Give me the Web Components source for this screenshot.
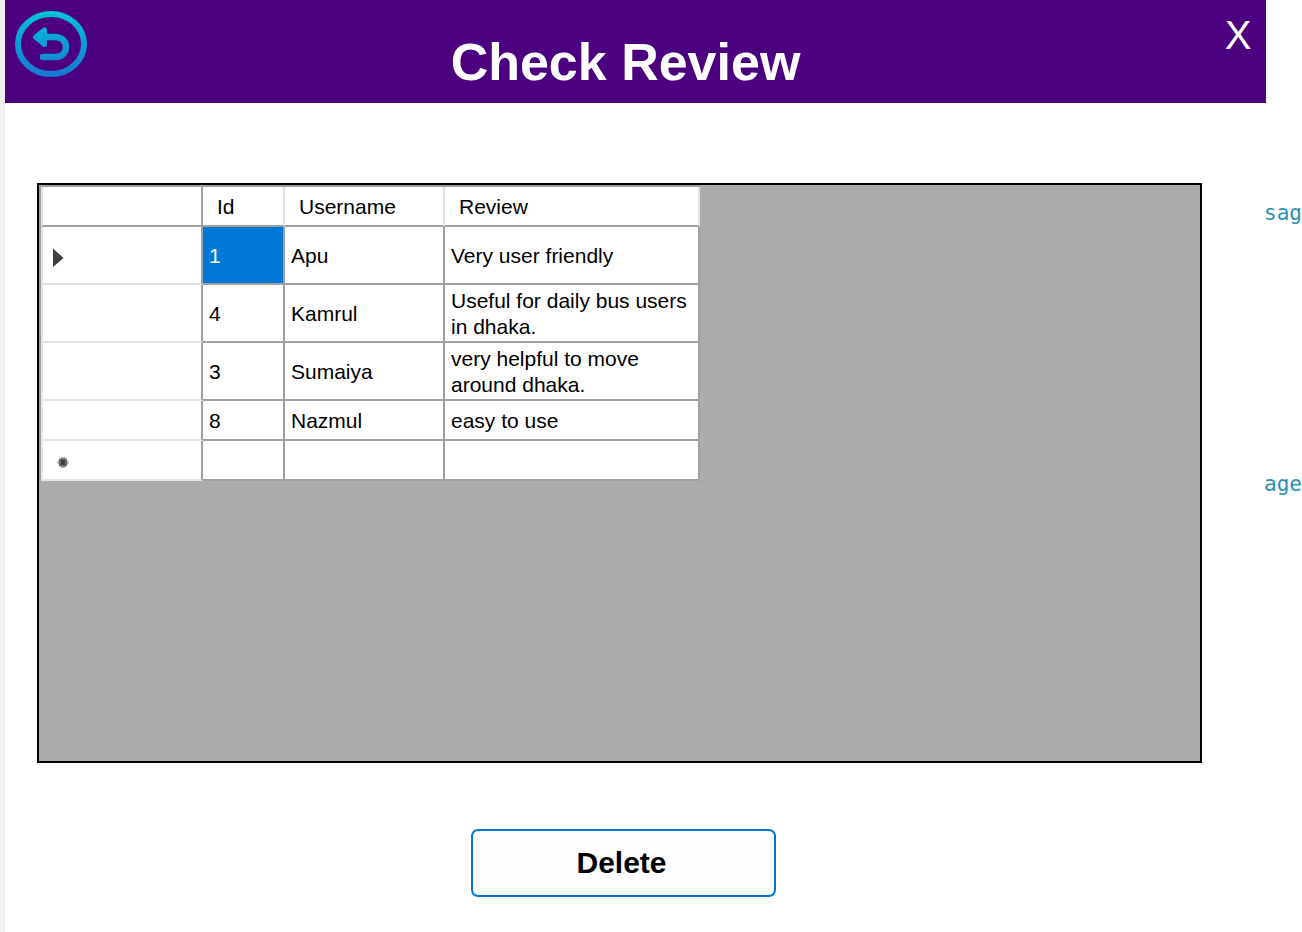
<!DOCTYPE html>
<html lang="en">
<head>
<meta charset="utf-8">
<title>Check Review</title>
<style>
body { margin: 0; background: #fff; font-family: "Liberation Sans", sans-serif; }
</style>
</head>
<body>
<review-window>
  <window-header slot="header">Check Review</window-header>
  <review-grid slot="grid"></review-grid>
  <action-button slot="action">Delete</action-button>
  <code-peek slot="code"></code-peek>
</review-window>

<template id="review-window">
  <style>
    :host { display: grid; grid-template-columns: 5px minmax(0, 1fr) 36px; min-height: 100vh; }
    .edge { background: #f0f0f0; }
    .form { display: flex; flex-direction: column; }
    .grid { flex: 1; display: flex; padding: 80px 64px 66px 32px; }
    .grid ::slotted(*) { flex: 1; min-width: 0; }
    .action { display: flex; justify-content: center; padding: 0 24px 35px 0; }
  </style>
  <div class="edge"></div>
  <main class="form">
    <slot name="header"></slot>
    <div class="grid"><slot name="grid"></slot></div>
    <div class="action"><slot name="action"></slot></div>
  </main>
  <slot name="code"></slot>
</template>

<template id="window-header">
  <style>
    :host { display: grid; grid-template-columns: 80px 1fr 100px; height: 103px; background: #4b0080; color: #fff; }
    h1 { margin: 0; padding-top: 32px; text-align: center; font-size: 52px; line-height: 60px; font-weight: 700; }
    button { border: 0; background: none; color: inherit; font: inherit; padding: 0; cursor: pointer; }
    .back { justify-self: start; align-self: start; margin: 11px 0 0 10px; height: 66px; }
    .back svg { display: block; }
    .close { justify-self: end; align-self: start; margin-top: 12px; width: 56px; font-size: 40px; line-height: 46px; }
  </style>
  <button class="back" aria-label="Back">
    <svg width="72" height="66" viewBox="0 0 72 66" fill="none">
      <defs><linearGradient id="g" gradientUnits="userSpaceOnUse" x1="0" y1="0" x2="0" y2="66">
        <stop offset="0" stop-color="#00c3d8"/><stop offset="1" stop-color="#1976d2"/></linearGradient></defs>
      <ellipse cx="36" cy="33" rx="33" ry="30" stroke="url(#g)" stroke-width="6"/>
      <path d="M27 26H39.500C47 26 51 30.500 51 36S47 46 40 46H28" stroke="url(#g)" stroke-width="6.500" stroke-linecap="round"/>
      <path d="M20.500 26L29.500 19V33.500Z" fill="url(#g)" stroke="url(#g)" stroke-width="5" stroke-linejoin="round"/>
    </svg>
  </button>
  <h1><slot></slot></h1>
  <button class="close" aria-label="X">X</button>
</template>

<template id="review-grid">
  <style>
    :host { display: block; box-sizing: border-box; border: 2px solid #000; background: #ababab; min-height: 480px; }
    table { table-layout: fixed; width: 661px; border-collapse: separate; border-spacing: 0; border: solid #a0a0a0; border-width: 2px 0 0 2px; background: #fff; color: #000; font: 21px/26px "Liberation Sans", sans-serif; }
    .c0 { width: 162px; } .c1 { width: 82px; } .c2 { width: 160px; } .c3 { width: 255px; }
    th, td { box-sizing: border-box; height: 40px; padding: 2px 4px 0 6px; border: solid #a0a0a0; border-width: 0 2px 2px 0; text-align: left; font-weight: 400; vertical-align: middle; }
    thead th { padding: 2px 4px 0 14px; border-right-color: #e3e3e3; }
    thead td { border-right-color: #a0a0a0; border-left: 2px solid #e3e3e3; }
    tbody th { padding: 0 0 0 10px; border-left: 2px solid #e3e3e3; border-bottom-color: #e3e3e3; }
    .tall > * { height: 58px; }
    .selected { background: #0078d7; color: #fff; }
    svg { display: block; }
  </style>
  <table aria-label="Reviews">
    <colgroup><col class="c0"><col class="c1"><col class="c2"><col class="c3"></colgroup>
    <thead><tr><td></td><th scope="col">Id</th><th scope="col">Username</th><th scope="col">Review</th></tr></thead>
    <tbody>
      <tr class="tall"><th scope="row"><svg width="20" height="24" viewBox="0 0 20 24"><path d="M0 5.500L10.500 15L0 24Z" fill="#404040"/></svg></th><td class="selected">1</td><td>Apu</td><td>Very user friendly</td></tr>
      <tr class="tall"><th scope="row"></th><td>4</td><td>Kamrul</td><td>Useful for daily bus users in dhaka.</td></tr>
      <tr class="tall"><th scope="row"></th><td>3</td><td>Sumaiya</td><td>very helpful to move around dhaka.</td></tr>
      <tr><th scope="row"></th><td>8</td><td>Nazmul</td><td>easy to use</td></tr>
      <tr><th scope="row"><svg width="20" height="24" viewBox="0 0 20 24"><path d="M10 9V20M4.500 14.500H15.500" stroke="#b0b0b0" stroke-width="4"/><rect x="6" y="10.500" width="8" height="8" rx="1" fill="#686868"/><rect x="8" y="12" width="4" height="5" fill="#404040"/></svg></th><td></td><td></td><td></td></tr>
    </tbody>
  </table>
</template>

<template id="action-button">
  <style>
    :host { display: block; }
    button { display: block; box-sizing: border-box; width: 305px; height: 68px; padding: 0 4px 0 0; border: 2px solid #0078d7; border-radius: 7px; background: #fdfdfd; color: #000; font: 700 30px/36px "Liberation Sans", sans-serif; cursor: pointer; }
  </style>
  <button><slot></slot></button>
</template>

<template id="code-peek">
  <style>
    :host { display: block; margin-left: -2px; padding-top: 200px; color: #2b91af; font: 21px/26px "DejaVu Sans Mono", monospace; white-space: nowrap; }
    p { margin: 0 0 245px; }
  </style>
  <p>sag</p>
  <p>age</p>
</template>

<script>
for (const name of ["review-window", "window-header", "review-grid", "action-button", "code-peek"]) {
  customElements.define(name, class extends HTMLElement {
    constructor() {
      super();
      this.attachShadow({ mode: "open" }).append(document.getElementById(name).content.cloneNode(true));
    }
  });
}
</script>
</body>
</html>
